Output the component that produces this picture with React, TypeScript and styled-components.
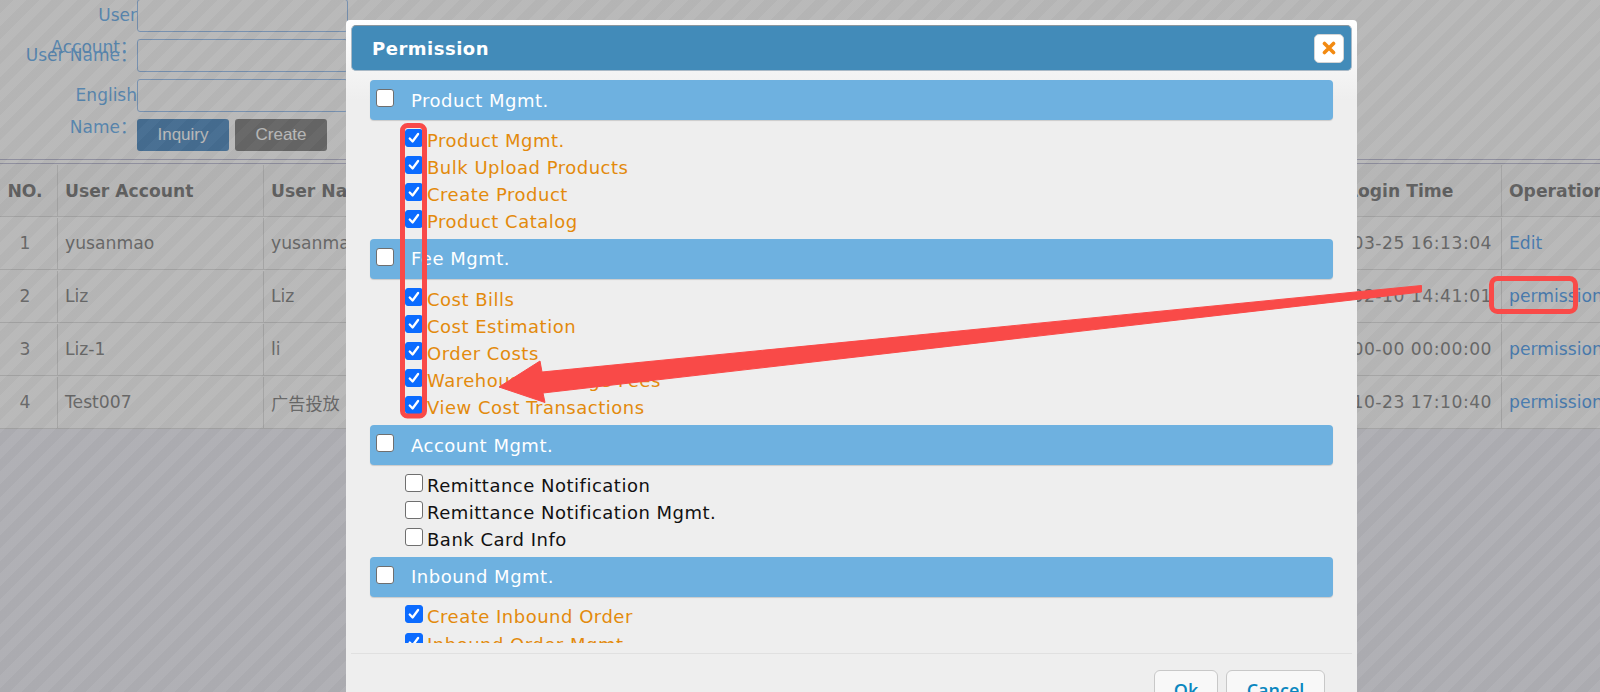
import styled, { createGlobalStyle } from "styled-components";

const GlobalStyle = createGlobalStyle`
  html, body {
    margin: 0;
    height: 692px;
    overflow: hidden;
    background: #fff;
  }
  * {
    box-sizing: border-box;
  }
`;

const FONT = `"DejaVu Sans", "Noto Sans CJK SC", sans-serif`;

const checkIcon = `url("data:image/svg+xml,%3Csvg xmlns='http://www.w3.org/2000/svg' viewBox='0 0 18 18'%3E%3Cpath d='M4.2 9.6l3.2 3.3 6.2-8.4' fill='none' stroke='white' stroke-width='2.6' stroke-linecap='round' stroke-linejoin='round'/%3E%3C/svg%3E")`;

const rows = [
  { no: "1", account: "yusanmao", name: "yusanmao", time: "2023-03-25 16:13:04", op: "Edit" },
  { no: "2", account: "Liz", name: "Liz", time: "2023-02-10 14:41:01", op: "permission" },
  { no: "3", account: "Liz-1", name: "li", time: "0000-00-00 00:00:00", op: "permission" },
  { no: "4", account: "Test007", name: "广告投放", time: "2022-10-23 17:10:40", op: "permission" },
];

const groups = [
  {
    title: "Product Mgmt.",
    items: [
      { label: "Product Mgmt.", on: true },
      { label: "Bulk Upload Products", on: true },
      { label: "Create Product", on: true },
      { label: "Product Catalog", on: true },
    ],
  },
  {
    title: "Fee Mgmt.",
    items: [
      { label: "Cost Bills", on: true },
      { label: "Cost Estimation", on: true },
      { label: "Order Costs", on: true },
      { label: "Warehouse Storage Fees", on: true },
      { label: "View Cost Transactions", on: true },
    ],
  },
  {
    title: "Account Mgmt.",
    items: [
      { label: "Remittance Notification", on: false },
      { label: "Remittance Notification Mgmt.", on: false },
      { label: "Bank Card Info", on: false },
    ],
  },
  {
    title: "Inbound Mgmt.",
    items: [
      { label: "Create Inbound Order", on: true },
      { label: "Inbound Order Mgmt.", on: true },
      { label: "Inbound Tracking", on: true },
    ],
  },
];

export default function App() {
  return (
    <>
      <GlobalStyle />
      <Page>
        <SearchForm>
          <FormRow>
            <FieldLabel>User Account：</FieldLabel>
            <FieldInput />
          </FormRow>
          <FormRow>
            <FieldLabel>User Name：</FieldLabel>
            <FieldInput />
          </FormRow>
          <FormRow>
            <FieldLabel>English Name：</FieldLabel>
            <FieldInput />
          </FormRow>
          <FormButtons>
            <FormButton $color="#0058a8">Inquiry</FormButton>
            <FormButton $color="#484848">Create</FormButton>
          </FormButtons>
        </SearchForm>

        <UserTable>
          <HeadRow>
            <NoCell>NO.</NoCell>
            <Cell>User Account</Cell>
            <Cell>User Name</Cell>
            <Cell>Last Login Time</Cell>
            <Cell>Operation</Cell>
          </HeadRow>
          {rows.map((row) => (
            <BodyRow key={row.no}>
              <NoCell>{row.no}</NoCell>
              <Cell>{row.account}</Cell>
              <Cell>{row.name}</Cell>
              <TimeCell>{row.time}</TimeCell>
              <LinkCell>{row.op}</LinkCell>
            </BodyRow>
          ))}
        </UserTable>

        <Overlay />

        <Dialog>
          <DialogHeader>
            <DialogTitle>Permission</DialogTitle>
            <CloseButton aria-label="Close">
              <svg width="14" height="14" viewBox="0 0 14 14">
                <path
                  d="M2.5 2.5L11.5 11.5M11.5 2.5L2.5 11.5"
                  stroke="#f28a12"
                  strokeWidth="3.6"
                  strokeLinecap="round"
                />
              </svg>
            </CloseButton>
          </DialogHeader>
          <DialogBody>
            {groups.map((group) => (
              <section key={group.title}>
                <GroupBar>
                  <BarCheck type="checkbox" readOnly />
                  <GroupTitle>{group.title}</GroupTitle>
                </GroupBar>
                <ItemList>
                  {group.items.map((item) => (
                    <Item key={item.label} $on={item.on}>
                      <ItemCheck type="checkbox" checked={item.on} readOnly />
                      <ItemLabel>{item.label}</ItemLabel>
                    </Item>
                  ))}
                </ItemList>
              </section>
            ))}
          </DialogBody>
          <DialogFooter>
            <FooterButton>Ok</FooterButton>
            <FooterButton $wide>Cancel</FooterButton>
          </DialogFooter>
        </Dialog>

        <Annotations viewBox="0 0 1600 692">
          <rect x="402.5" y="125.5" width="22" height="290.5" rx="5" fill="none" stroke="#f94a48" strokeWidth="5" />
          <rect x="1491.5" y="278.5" width="84" height="33" rx="6" fill="none" stroke="#f94a48" strokeWidth="5" />
          <path
            d="M1421.5 285.5L1421.5 292L543 393L545 402.5L499 387L540 361L542 372Z"
            fill="#f94a48"
            stroke="#f94a48"
            strokeWidth="1"
            strokeLinejoin="round"
          />
        </Annotations>
      </Page>
    </>
  );
}

const Page = styled.div`
  position: relative;
  width: 1600px;
  height: 692px;
  overflow: hidden;
  background: #eaeaf5;
  font-family: ${FONT};
  font-size: 17.2px;
`;

const SearchForm = styled.div`
  display: flex;
  flex-direction: column;
  margin-top: -1px;
  background: #fff;
`;

const FormRow = styled.div`
  display: flex;
  height: 40px;
`;

const FieldLabel = styled.label`
  width: 137px;
  flex: none;
  padding-left: 12px;
  text-align: right;
  font-size: 17px;
  line-height: 32px;
  height: 33px;
  color: #258ce6;
`;

const FieldInput = styled.div`
  width: 211px;
  height: 33px;
  border: 1.5px solid #6aa3e8;
  border-radius: 3px;
  background: #fff;
`;

const FormButtons = styled.div`
  display: flex;
  gap: 6px;
  padding-left: 137px;
  padding-bottom: 8px;
`;

const FormButton = styled.button<{ $color: string }>`
  width: 92px;
  height: 32px;
  padding: 0;
  border: none;
  border-radius: 3px;
  background: ${(props) => props.$color};
  color: #fff;
  font-family: "Liberation Sans", Arial, sans-serif;
  font-size: 17px;
`;

const UserTable = styled.div`
  width: 1730px;
  padding-top: 3px;
  border-top: 1px solid #9f9fc0;
  background: #fff;
`;

const HeadRow = styled.div`
  display: grid;
  grid-template-columns: 58px 206px 1029px 209px 228px;
  height: 54px;
  padding-top: 1px;
  border-top: 1px solid #9f9fc0;
  border-bottom: 1.5px solid #d0d0d0;
  font-weight: 700;
  color: #3a3a3a;
  background: #f8f8f8;
`;

const BodyRow = styled.div`
  display: grid;
  grid-template-columns: 58px 206px 1029px 209px 228px;
  height: 52.9px;
  padding-top: 1px;
  border-bottom: 1.5px solid #d0d0d0;
  color: #4a4a4a;
`;

const Cell = styled.div`
  display: flex;
  align-items: center;
  padding-left: 7px;
  border-right: 1.5px solid #d0d0d0;
  white-space: nowrap;
`;

const NoCell = styled(Cell)`
  justify-content: center;
  padding: 0 7px 0 0;
`;

const TimeCell = styled(Cell)`
  letter-spacing: 0.5px;
`;

const LinkCell = styled(Cell)`
  color: #0075e7;
`;

const Overlay = styled.div`
  position: absolute;
  inset: 0;
  background: repeating-linear-gradient(
    -45deg,
    rgba(131, 131, 131, 0.56) 0 9px,
    rgba(122, 122, 122, 0.56) 9px 18px
  );
`;

const Dialog = styled.div`
  position: absolute;
  left: 346px;
  top: 20px;
  width: 1011px;
  height: 700px;
  display: flex;
  flex-direction: column;
  padding: 5px 5px 0;
  border-radius: 4px 4px 0 0;
  background: linear-gradient(#ffffff 0, #eeeeee 80px);
  font-size: 18px;
  letter-spacing: 0.5px;
`;

const DialogHeader = styled.div`
  display: flex;
  align-items: center;
  justify-content: space-between;
  flex: none;
  height: 46px;
  padding: 0 7px 0 20px;
  border: 1px solid #a9b9c6;
  border-top-color: #8c979f;
  border-radius: 5px;
  background: #428bb9;
`;

const DialogTitle = styled.span`
  color: #fff;
  font-weight: 700;
`;

const CloseButton = styled.button`
  display: flex;
  align-items: center;
  justify-content: center;
  width: 30px;
  height: 29px;
  padding: 0;
  border: 1px solid #d4d4d4;
  border-radius: 5px;
  background: #fff;
`;

const DialogBody = styled.div`
  flex: none;
  height: 572px;
  padding: 9px 19px 0;
  overflow: hidden;
`;

const GroupBar = styled.div`
  display: flex;
  height: 40px;
  padding-left: 6px;
  align-items: center;
  gap: 17px;
  border-radius: 4px;
  background: #6eb1e0;
  box-shadow: 0 1px 1px rgba(0, 0, 0, 0.15);
`;

const GroupTitle = styled.span`
  color: #fff;
`;

const Box = styled.input`
  appearance: none;
  flex: none;
  width: 18px;
  height: 18px;
  margin: 0;
  border: 1px solid #6f6f6f;
  border-radius: 3px;
  background: #fff;
`;

const BarCheck = styled(Box)`
  position: relative;
  top: -2px;
`;

const ItemCheck = styled(Box)`
  position: relative;
  top: -2px;

  &:checked {
    border-color: #0b6bff;
    background: #0b6bff ${checkIcon} center / 100% no-repeat;
  }
`;

const ItemList = styled.div`
  padding: 6px 0 4.2px 35px;
`;

const Item = styled.div<{ $on: boolean }>`
  display: flex;
  align-items: center;
  gap: 4px;
  height: 27.2px;
  color: ${(props) => (props.$on ? "#e38a0c" : "#111")};
`;

const ItemLabel = styled.span`
  padding-top: 1px;
`;

const DialogFooter = styled.div`
  display: flex;
  flex: none;
  justify-content: flex-end;
  gap: 8px;
  margin-top: 10px;
  padding: 16px 27px 0 0;
  border-top: 1.5px solid #e0e0e0;
`;

const FooterButton = styled.button<{ $wide?: boolean }>`
  width: ${(props) => (props.$wide ? "99px" : "64px")};
  height: 40px;
  padding: 0;
  border: 1px solid #c8c8c8;
  border-radius: 6px;
  background: #f8f8f8;
  color: #0a87bf;
  font-family: "Open Sans", sans-serif;
  font-size: 18px;
  font-weight: 600;
  letter-spacing: 0;
`;

const Annotations = styled.svg`
  position: absolute;
  inset: 0;
  width: 1600px;
  height: 692px;
  pointer-events: none;
`;
